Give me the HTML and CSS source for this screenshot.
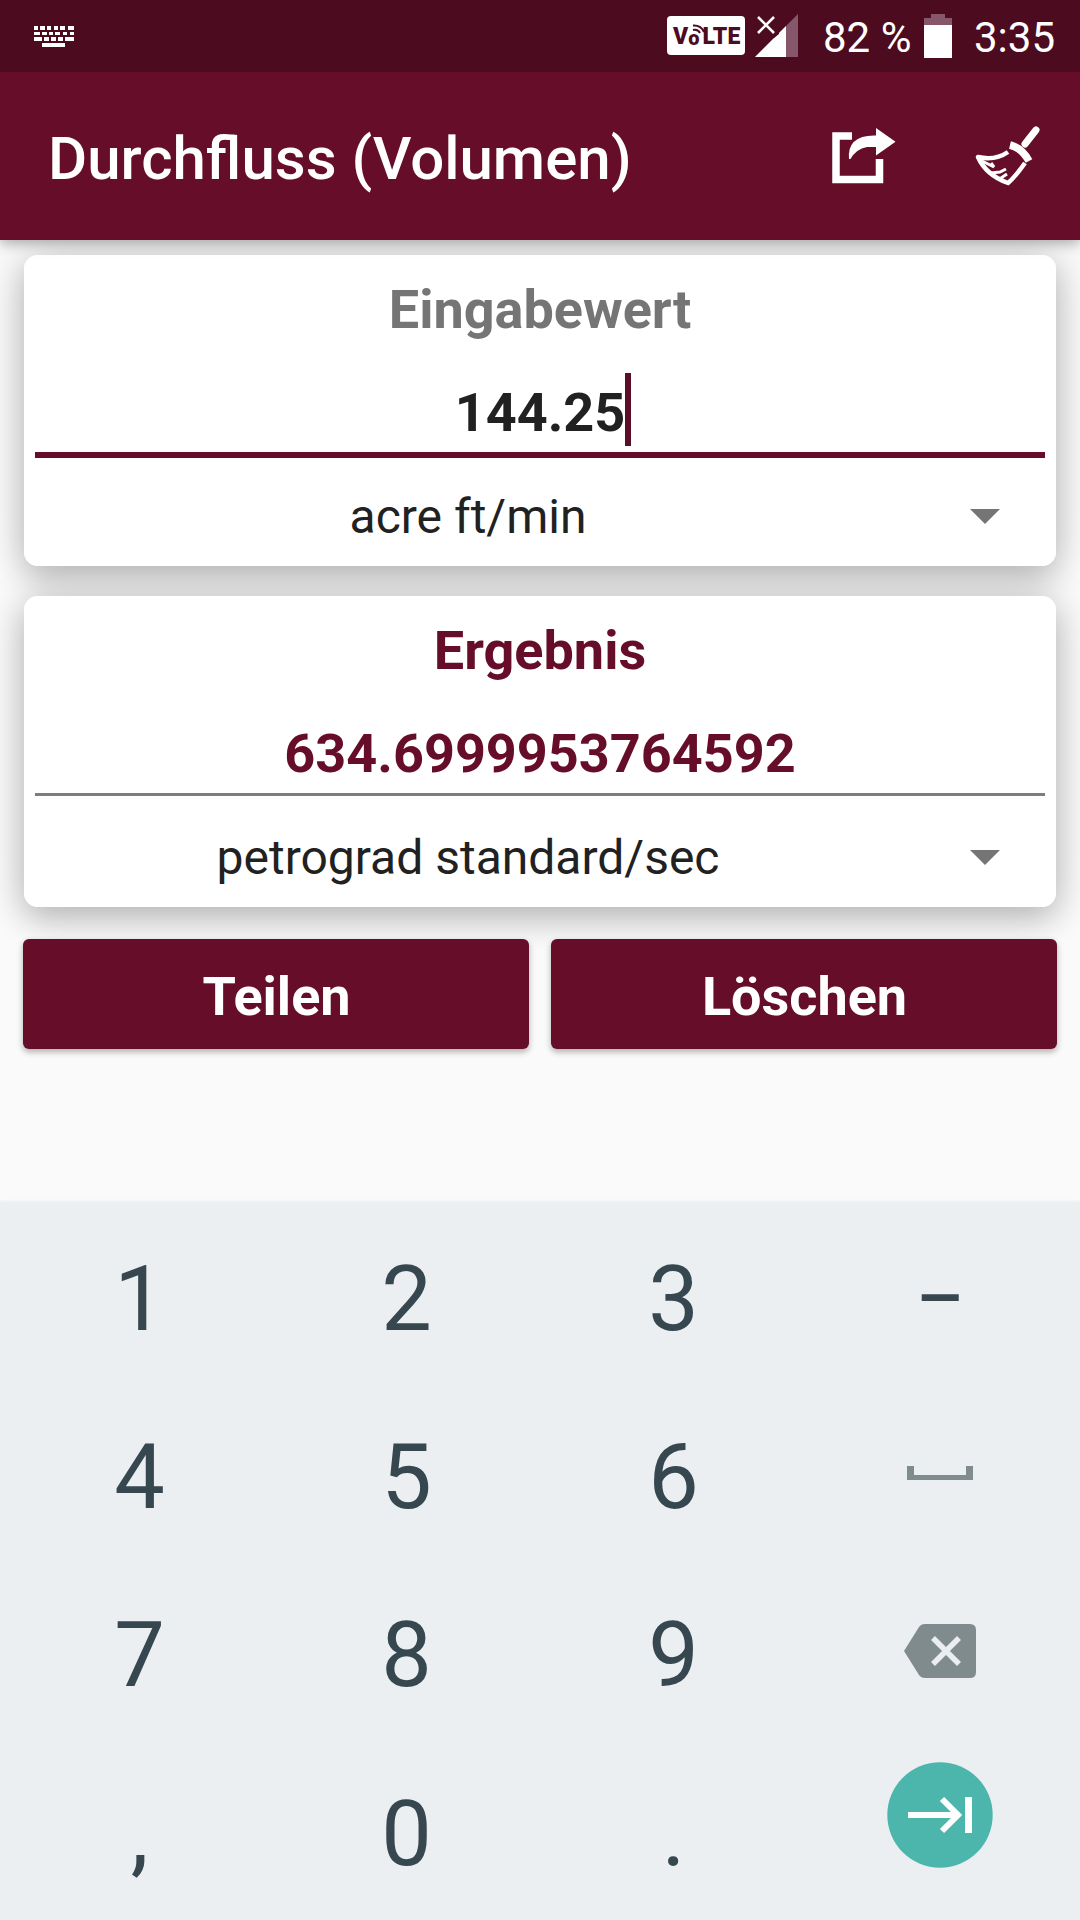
FILE: index.html
```html
<!DOCTYPE html>
<html lang="de">
<head>
<meta charset="utf-8">
<title>Durchfluss (Volumen)</title>
<link rel="stylesheet" href="styles.css">
</head>
<body>
<div class="status">
  <svg class="status-keyboard" width="40" height="21" viewBox="0 0 40 21" fill="#fff">
    <path d="M0 0h4v4H0zM6 0h5v4H6zM13 0h4v4h-4zM20 0h4v4h-4zM26 0h5v4h-5zM34 0h6v4h-6zM0 6h6v3H0zM8 6h5v3H8zM15 6h4v3h-4zM21 6h5v3h-5zM29 6h4v3h-4zM36 6h4v3h-4zM0 11h8v4H0zM10 11h5v4h-5zM17 11h5v4h-5zM24 11h5v4h-5zM31 11h9v4h-9zM8 17h23v4H8z"/>
  </svg>
  <div class="volte">
    <span class="volte-v">V</span><span class="volte-o">o</span><span class="volte-lte">LTE</span>
    <svg class="volte-waves" width="14" height="14" viewBox="0 0 14 14" fill="none" stroke="#4d0b20" stroke-width="2">
      <path d="M0 1.500Q8 1 11 8M0 6Q5 5 7 9"/>
    </svg>
  </div>
  <svg class="signal" width="44" height="44" viewBox="0 0 44 44">
    <path d="M43 1V43H0L43 0Z" fill="#86576a"/>
    <path d="M0 43L31 12V43Z" fill="#fff"/>
    <path d="M0 0H24V20L19 24H0Z" fill="#4d0b20"/>
    <path d="M3 3L19 19M19 3L3 19" stroke="#fff" stroke-width="2.6"/>
  </svg>
  <span class="status-percent">82 %</span>
  <svg class="battery" width="28" height="44" viewBox="0 0 28 44">
    <path d="M7 0H21V4H28V11H0V4H7Z" fill="#86576a"/>
    <path d="M0 11H28V44H0Z" fill="#fff"/>
  </svg>
  <span class="status-time">3:35</span>
</div>
<header class="appbar">
  <h1 class="title">Durchfluss (Volumen)</h1>
  <svg class="share" width="66" height="60" viewBox="0 0 66 60">
    <path d="M22 7H6V50.500H49.500V30" fill="none" stroke="#fff" stroke-width="7.500"/>
    <path d="M46 -1L65.500 12.700L46 26.600V18H37Q26 20 20.500 30H19Q17 7 44 6.600H46Z" fill="#fff"/>
  </svg>
  <svg class="broom" width="66" height="60" viewBox="0 0 66 60" fill="none" stroke="#fff">
    <path d="M61 3L50 17" stroke-width="7" stroke-linecap="round"/>
    <path d="M35 18Q47 21 54 34" stroke-width="7.500"/>
    <path d="M33 25Q20 34 3 30Q11 48 33 56Q40 50 50 36" stroke-width="4.500" stroke-linejoin="round"/>
    <path d="M7 34L19 40L16 36M16 46L25 45L31 42M26 51L32 47" stroke-width="3"/>
  </svg>
</header>
<main class="content">
  <section class="card">
    <h2 class="card-title">Eingabewert</h2>
    <div class="field field-active"><span class="value">144.25<i class="caret"></i></span></div>
    <div class="spinner"><span class="unit">acre ft/min</span><i class="arrow"></i></div>
  </section>
  <section class="card">
    <h2 class="card-title accent">Ergebnis</h2>
    <div class="field accent"><span class="value">634.6999953764592</span></div>
    <div class="spinner"><span class="unit">petrograd standard/sec</span><i class="arrow"></i></div>
  </section>
  <div class="actions">
    <button class="action">Teilen</button>
    <button class="action">Löschen</button>
  </div>
</main>
<div class="keypad">
  <div class="key">1</div><div class="key">2</div><div class="key">3</div><div class="key key-dash">–</div>
  <div class="key">4</div><div class="key">5</div><div class="key">6</div>
  <div class="key key-space"><svg width="66" height="14"><path d="M0 0H7V9H59V0H66V14H0Z" fill="#808b8d"/></svg></div>
  <div class="key">7</div><div class="key">8</div><div class="key">9</div>
  <div class="key key-back">
    <svg width="72" height="54" viewBox="0 0 72 54">
      <path d="M0 27L15 3Q17 0 21 0H66Q72 0 72 6V48Q72 54 66 54H21Q17 54 15 51Z" fill="#808b8d"/>
      <path d="M29 14L55 40M55 14L29 40" stroke="#ebeef1" stroke-width="5.500"/>
    </svg>
  </div>
  <div class="key">,</div><div class="key">0</div><div class="key">.</div>
  <div class="key key-next">
    <svg width="106" height="106" viewBox="0 0 106 106">
      <circle cx="53" cy="53" r="52.700" fill="#4db6ac"/>
      <path d="M21 53H71M55 37L71 53L55 69" fill="none" stroke="#fff" stroke-width="6"/>
      <path d="M78 35H85V71H78Z" fill="#fff"/>
    </svg>
  </div>
</div>
</body>
</html>
```
FILE: styles.css
```css
* { box-sizing: border-box; }

body {
  margin: 0;
  width: 1080px;
  height: 1920px;
  overflow: hidden;
  display: flex;
  flex-direction: column;
  background: #fafafa;
  color: #212121;
  font-family: Roboto, sans-serif;
}

svg { display: block; flex: none; overflow: visible; }

.status {
  position: relative;
  z-index: 2;
  height: 72px;
  flex: none;
  display: flex;
  align-items: flex-start;
  padding: 0 25px 0 34px;
  background: #4d0b20;
  color: #fff;
  font-size: 42px;
  line-height: 75px;
  white-space: nowrap;
}

.status-keyboard { margin-top: 26px; }

.volte {
  position: relative;
  width: 78px;
  height: 39px;
  margin: 16px 0 0 auto;
  border-radius: 4px;
  background: #fff;
  color: #4d0b20;
  font-size: 23px;
  line-height: 42px;
  font-weight: 900;
  display: flex;
  padding-left: 6px;
}

.volte-o { font-size: 20px; line-height: 44px; margin-left: 0; }
.volte-lte { margin-left: 3px; letter-spacing: 0.2px; }
.volte-waves { position: absolute; left: 26px; top: 8px; }

.signal { margin: 14px 0 0 10px; }
.status-percent { margin-left: 24px; width: 89px; }
.battery { margin: 14px 0 0 12px; }
.status-time { width: 81px; margin-left: 22px; }

.appbar {
  position: relative;
  z-index: 1;
  height: 168px;
  flex: none;
  display: flex;
  align-items: flex-start;
  padding: 56px 39px 0 48px;
  background: #650d29;
  color: #fff;
  box-shadow: 0 4px 12px rgba(0, 0, 0, 0.3);
}

.title {
  margin: 0;
  font-size: 60px;
  line-height: 61px;
  font-weight: 500;
}

.share { margin: 1px 0 0 auto; }
.broom { margin: -1px 0 0 79px; }

.content {
  position: relative;
  z-index: 0;
  height: 962px;
  flex: none;
  display: flex;
  flex-direction: column;
  padding: 15px 23px 0;
}

.card {
  position: relative;
  height: 311px;
  margin: 0 1px 30px;
  border-radius: 14px;
  background: #fff;
  padding: 0 11px;
}

/* Shadows sit below every card so that neighbours stay pure white. */
.card::before {
  content: "";
  position: absolute;
  inset: 0;
  z-index: -1;
  border-radius: 14px;
  box-shadow: 0 13px 32px rgba(0, 0, 0, 0.2), 0 0 44px rgba(0, 0, 0, 0.14);
}

.card-title {
  margin: 0;
  font-size: 54px;
  line-height: 109px;
  font-weight: 700;
  text-align: center;
  color: #757575;
}

.field {
  height: 91px;
  margin-bottom: 3px;
  padding-top: 9px;
  border-bottom: 3px solid #7b7e7c;
  font-size: 54px;
  line-height: 79px;
  font-weight: 700;
  text-align: center;
}

.field-active { height: 94px; margin-bottom: 0; border-bottom: 6px solid #650d29; }

.card-title.accent, .field.accent { color: #650d29; }

.value { position: relative; }

.caret {
  position: absolute;
  right: -6px;
  top: -8px;
  width: 6px;
  height: 73px;
  background: #5c0d29;
}

.spinner {
  height: 108px;
  display: flex;
  align-items: center;
  padding: 9px 45px 0 0;
  font-size: 48px;
}

.unit { width: 866px; text-align: center; }

.arrow {
  margin-left: auto;
  border: 15px solid transparent;
  border-top-color: #757575;
  border-bottom: 0;
}

.actions { display: flex; gap: 22px; padding-top: 2px; }

.action {
  flex: 1;
  height: 110px;
  border: 0;
  border-radius: 6px;
  padding: 5px 0 0 1px;
  background: #650d29;
  color: #fff;
  font: 700 54px/104px Roboto, sans-serif;
  box-shadow: 0 3px 6px rgba(0, 0, 0, 0.3);
}

.keypad {
  flex: 1;
  display: grid;
  grid-template-columns: repeat(4, 267px);
  grid-auto-rows: 178.400px;
  padding: 8px 0 0 6px;
  background: #ebeff2;
  color: #37474f;
  font-size: 90px;
  box-shadow: 0 -1px 3px rgba(0, 0, 0, 0.05);
}

.key { display: flex; align-items: center; justify-content: center; }
.key-dash { transform: scaleX(0.84); }
.key-space { padding: 0 1px 9px 0; }
.key-back { padding: 0 1px 9px 0; }
.key-next { padding: 0 1px 38px 0; }
```
